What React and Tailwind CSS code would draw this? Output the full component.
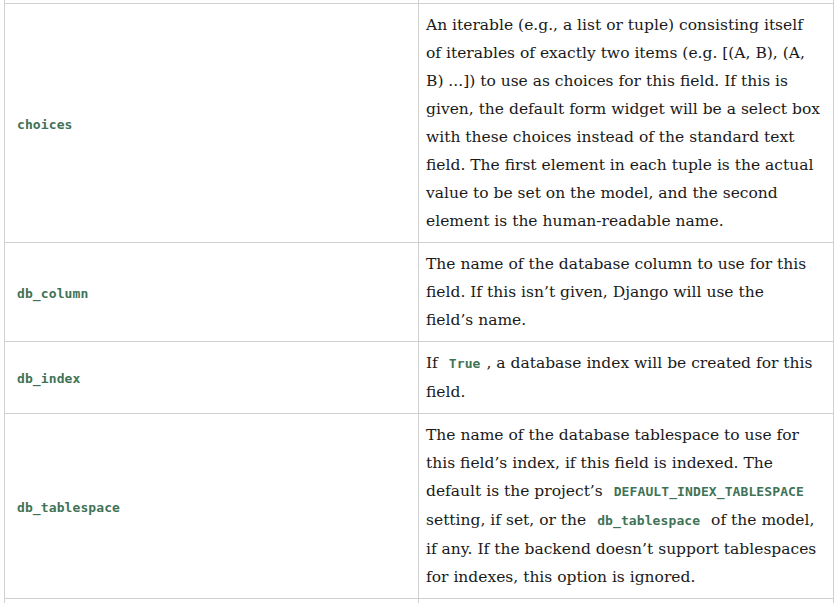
import React from "react";

const serif = { fontFamily: '"DejaVu Serif", serif' };

function Code({ children }) {
  return (
    <code className="mx-[6px] text-[13px] font-bold text-[#3f7357] [font-family:'DejaVu_Sans_Mono',monospace] tracking-[0.1px]">
      {children}
    </code>
  );
}

function Lines({ lines }) {
  return (
    <div>
      {lines.map((l, i) => (
        <div key={i} className="whitespace-nowrap">{l}</div>
      ))}
    </div>
  );
}

const rows = [
  {
    name: "choices",
    lines: [
      "An iterable (e.g., a list or tuple) consisting itself",
      "of iterables of exactly two items (e.g. [(A, B), (A,",
      "B) ...]) to use as choices for this field. If this is",
      "given, the default form widget will be a select box",
      "with these choices instead of the standard text",
      "field. The first element in each tuple is the actual",
      "value to be set on the model, and the second",
      "element is the human\u2011readable name.",
    ],
  },
  {
    name: "db_column",
    lines: [
      "The name of the database column to use for this",
      "field. If this isn\u2019t given, Django will use the",
      "field\u2019s name.",
    ],
  },
  {
    name: "db_index",
    lines: [
      <>If <Code>True</Code>, a database index will be created for this</>,
      "field.",
    ],
  },
  {
    name: "db_tablespace",
    lines: [
      "The name of the database tablespace to use for",
      "this field\u2019s index, if this field is indexed. The",
      <>default is the project’s <Code>DEFAULT_INDEX_TABLESPACE</Code></>,
      <>setting, if set, or the <Code>db_tablespace</Code> of the model,</>,
      "if any. If the backend doesn\u2019t support tablespaces",
      "for indexes, this option is ignored.",
    ],
  },
];

export default function App() {
  return (
    <div className="h-[603px] w-[840px] overflow-hidden bg-white">
      <table className="ml-[4px] w-[829px] table-fixed border-collapse">
        <colgroup>
          <col className="w-[414px]" />
          <col className="w-[415px]" />
        </colgroup>
        <tbody>
          <tr className="h-[3px]">
            <td className="border border-t-0 border-[#d0d0d0] p-0"></td>
            <td className="border border-t-0 border-[#d0d0d0] p-0"></td>
          </tr>
          {rows.map((r) => (
            <tr key={r.name}>
              <td className="border border-[#d0d0d0] px-[12px] align-middle">
                <code className="text-[13px] font-bold text-[#3f7357] [font-family:'DejaVu_Sans_Mono',monospace] tracking-[0.1px]">
                  {r.name}
                </code>
              </td>
              <td
                className="border border-[#d0d0d0] px-[7px] py-[7px] align-top text-[15.5px] leading-[28px] text-[#1a1a1a]"
                style={serif}
              >
                <Lines lines={r.lines} />
              </td>
            </tr>
          ))}
          <tr className="h-[60px]">
            <td className="border border-[#d0d0d0]"></td>
            <td className="border border-[#d0d0d0]"></td>
          </tr>
        </tbody>
      </table>
    </div>
  );
}
